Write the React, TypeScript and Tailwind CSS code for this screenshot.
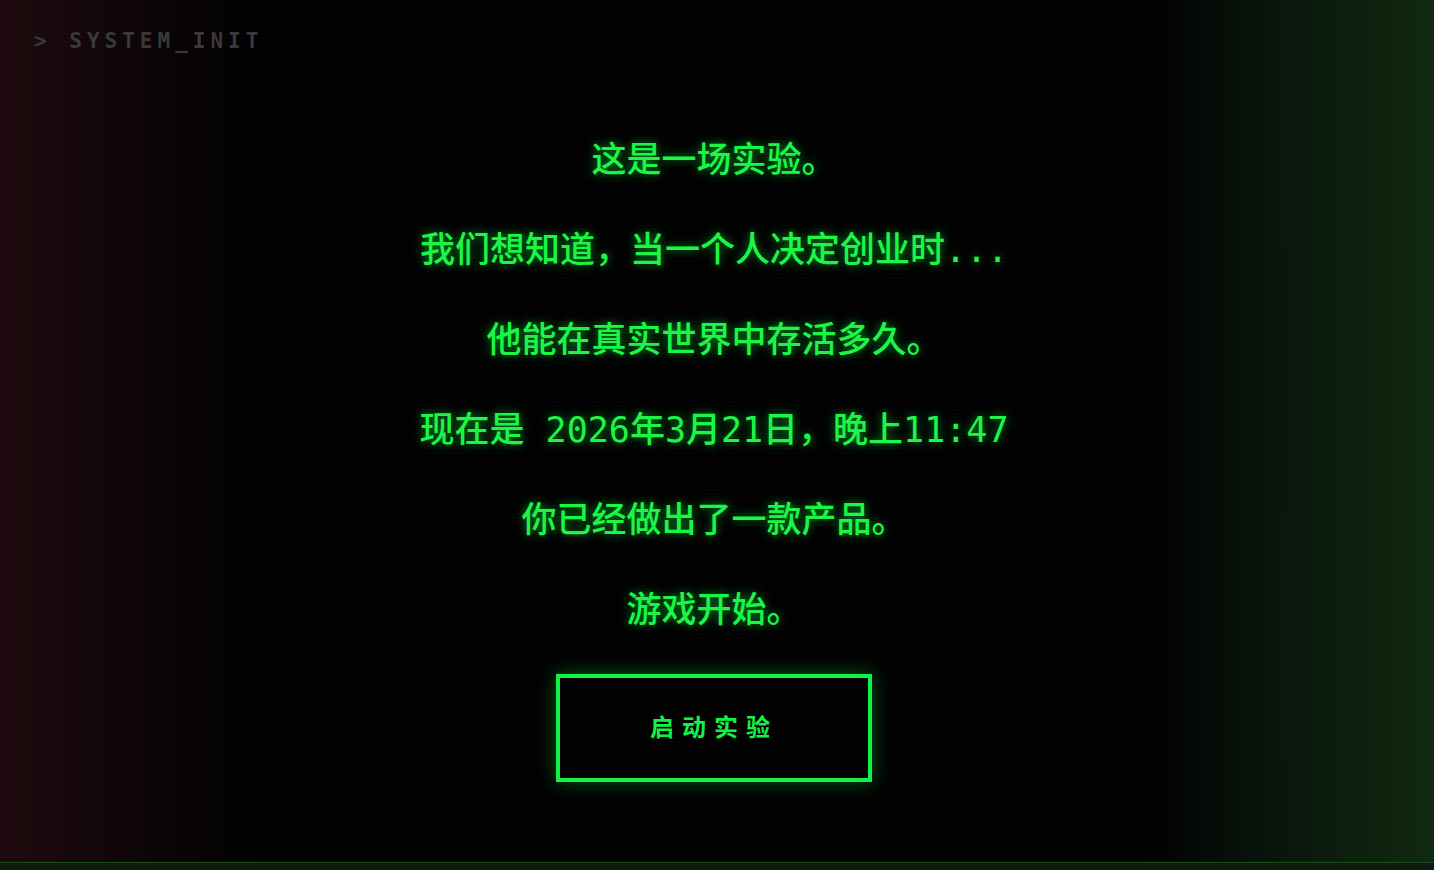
import React from 'react';

const lines = [
  '这是一场实验。',
  '我们想知道，当一个人决定创业时...',
  '他能在真实世界中存活多久。',
  '现在是 2026年3月21日，晚上11:47',
  '你已经做出了一款产品。',
  '游戏开始。',
];

export default function App() {
  return (
    <div className="relative flex h-screen w-full flex-col overflow-hidden bg-black bg-[linear-gradient(to_right,#1e0a0e_0%,#0c0405_10%,transparent_18%,transparent_80%,#07130a_88%,#10280f_100%)] font-['DejaVu_Sans_Mono','Noto_Sans_CJK_SC',monospace]">
      {/* scanlines */}
      <div className="pointer-events-none absolute inset-0 bg-[repeating-linear-gradient(0deg,rgba(255,255,255,0.018)_0px,rgba(255,255,255,0.018)_1px,transparent_1px,transparent_4px)]" />

      <div className="px-[34px] pt-[28px] text-[21px] font-bold leading-[26px] tracking-[5px] text-[#383838]">
        &gt; SYSTEM_INIT
      </div>

      <main className="flex flex-1 flex-col items-center pt-[61px] pr-[6px]">
        {lines.map((line) => (
          <p
            key={line}
            className="h-[90px] text-[35px] font-medium leading-[90px] text-[#1cf545] [text-shadow:0_0_10px_rgba(0,255,65,0.6)]"
          >
            {line}
          </p>
        ))}

        <button className="mt-[19px] flex h-[108px] w-[316px] items-center justify-center border-[4px] border-[#12f246] bg-black text-[24px] font-bold tracking-[8px] text-[#12f246] shadow-[0_0_18px_rgba(0,255,65,0.35)]">
          启动实验
        </button>
      </main>

      <footer className="h-[8px] border-t border-[#1c4a1c] bg-[#0a1a0b]" />
    </div>
  );
}
